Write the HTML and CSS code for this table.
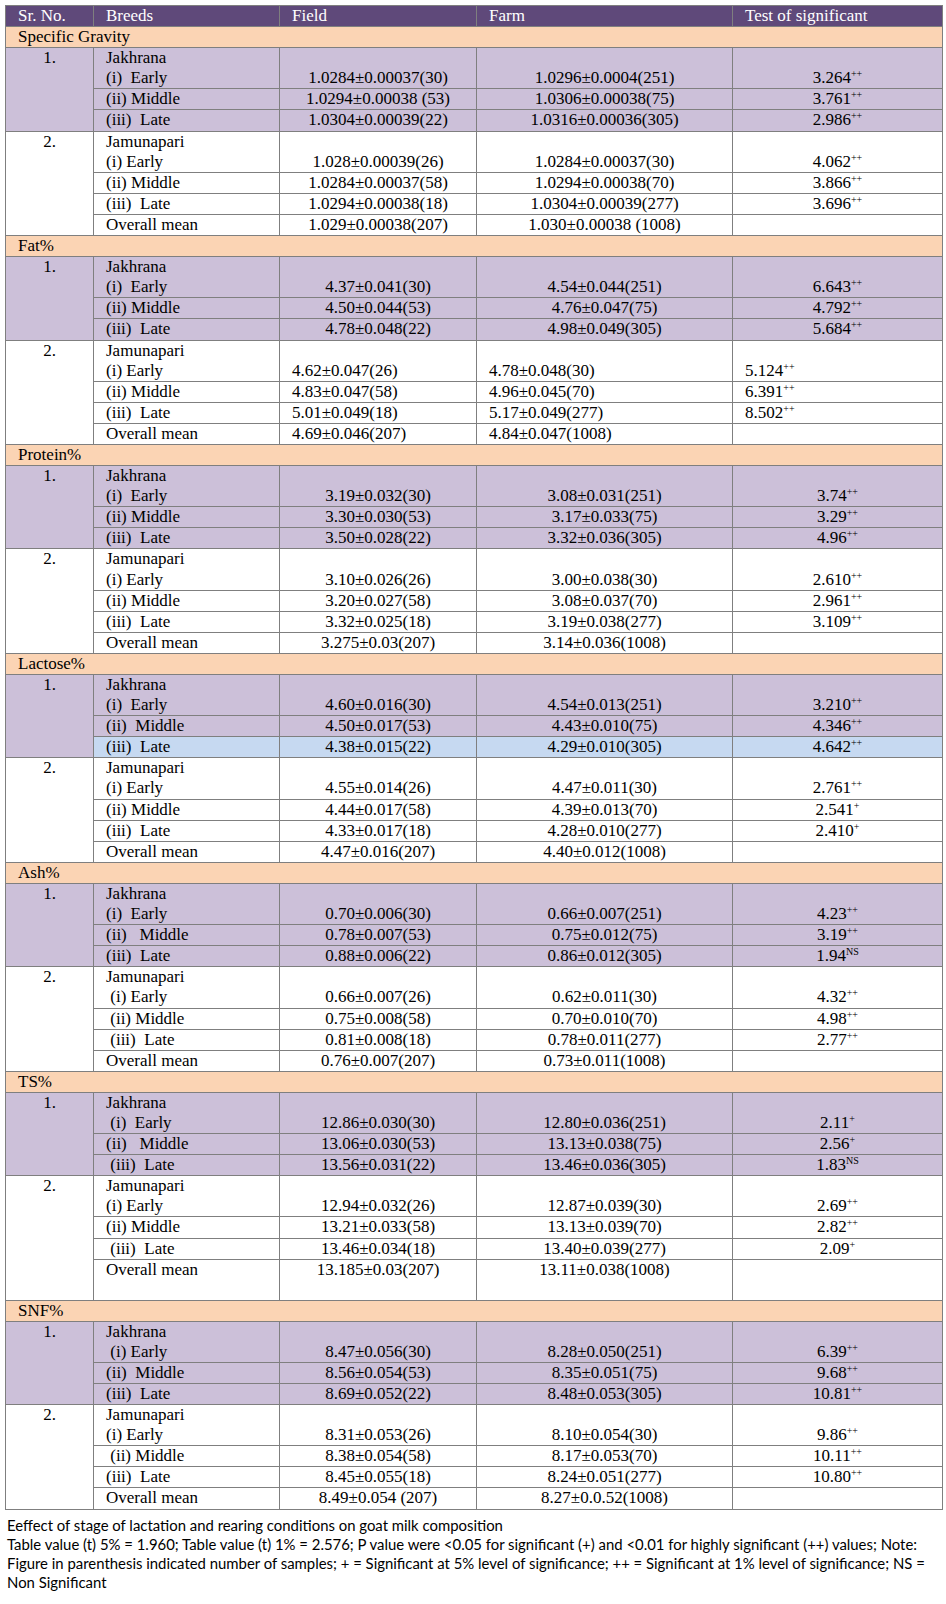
FILE: index.html
```html
<!DOCTYPE html>
<html>
<head>
<meta charset="utf-8">
<title>Goat milk composition</title>
<link rel="stylesheet" href="styles.css">
</head>
<body>
<table class="tbl">
<colgroup><col class="c1"><col class="c2"><col class="c3"><col class="c4"><col class="c5"></colgroup>
<tr class="hd"><th>Sr. No.</th><th>Breeds</th><th>Field</th><th>Farm</th><th>Test of significant</th></tr>

<tr class="sec"><td colspan="5">Specific Gravity</td></tr>
<tr class="jk"><td class="sn" rowspan="3">1.</td><td class="br">Jakhrana
(i)  Early</td><td class="v">1.0284±0.00037(30)</td><td class="v">1.0296±0.0004(251)</td><td class="v">3.264<sup>++</sup></td></tr>
<tr class="jk"><td class="br">(ii) Middle</td><td class="v">1.0294±0.00038 (53)</td><td class="v">1.0306±0.00038(75)</td><td class="v">3.761<sup>++</sup></td></tr>
<tr class="jk"><td class="br">(iii)  Late</td><td class="v">1.0304±0.00039(22)</td><td class="v">1.0316±0.00036(305)</td><td class="v">2.986<sup>++</sup></td></tr>
<tr class="jm"><td class="sn" rowspan="4">2.</td><td class="br">Jamunapari
(i) Early</td><td class="v">1.028±0.00039(26)</td><td class="v">1.0284±0.00037(30)</td><td class="v">4.062<sup>++</sup></td></tr>
<tr class="jm"><td class="br">(ii) Middle</td><td class="v">1.0284±0.00037(58)</td><td class="v">1.0294±0.00038(70)</td><td class="v">3.866<sup>++</sup></td></tr>
<tr class="jm"><td class="br">(iii)  Late</td><td class="v">1.0294±0.00038(18)</td><td class="v">1.0304±0.00039(277)</td><td class="v">3.696<sup>++</sup></td></tr>
<tr class="jm"><td class="br">Overall mean</td><td class="v">1.029±0.00038(207)</td><td class="v">1.030±0.00038 (1008)</td><td class="v"></td></tr>

<tr class="sec"><td colspan="5">Fat%</td></tr>
<tr class="jk"><td class="sn" rowspan="3">1.</td><td class="br">Jakhrana
(i)  Early</td><td class="v">4.37±0.041(30)</td><td class="v">4.54±0.044(251)</td><td class="v">6.643<sup>++</sup></td></tr>
<tr class="jk"><td class="br">(ii) Middle</td><td class="v">4.50±0.044(53)</td><td class="v">4.76±0.047(75)</td><td class="v">4.792<sup>++</sup></td></tr>
<tr class="jk"><td class="br">(iii)  Late</td><td class="v">4.78±0.048(22)</td><td class="v">4.98±0.049(305)</td><td class="v">5.684<sup>++</sup></td></tr>
<tr class="jm"><td class="sn" rowspan="4">2.</td><td class="br">Jamunapari
(i) Early</td><td class="v l">4.62±0.047(26)</td><td class="v l">4.78±0.048(30)</td><td class="v l">5.124<sup>++</sup></td></tr>
<tr class="jm"><td class="br">(ii) Middle</td><td class="v l">4.83±0.047(58)</td><td class="v l">4.96±0.045(70)</td><td class="v l">6.391<sup>++</sup></td></tr>
<tr class="jm"><td class="br">(iii)  Late</td><td class="v l">5.01±0.049(18)</td><td class="v l">5.17±0.049(277)</td><td class="v l">8.502<sup>++</sup></td></tr>
<tr class="jm"><td class="br">Overall mean</td><td class="v l">4.69±0.046(207)</td><td class="v l">4.84±0.047(1008)</td><td class="v l"></td></tr>

<tr class="sec"><td colspan="5">Protein%</td></tr>
<tr class="jk"><td class="sn" rowspan="3">1.</td><td class="br">Jakhrana
(i)  Early</td><td class="v">3.19±0.032(30)</td><td class="v">3.08±0.031(251)</td><td class="v">3.74<sup>++</sup></td></tr>
<tr class="jk"><td class="br">(ii) Middle</td><td class="v">3.30±0.030(53)</td><td class="v">3.17±0.033(75)</td><td class="v">3.29<sup>++</sup></td></tr>
<tr class="jk"><td class="br">(iii)  Late</td><td class="v">3.50±0.028(22)</td><td class="v">3.32±0.036(305)</td><td class="v">4.96<sup>++</sup></td></tr>
<tr class="jm"><td class="sn" rowspan="4">2.</td><td class="br">Jamunapari
(i) Early</td><td class="v">3.10±0.026(26)</td><td class="v">3.00±0.038(30)</td><td class="v">2.610<sup>++</sup></td></tr>
<tr class="jm"><td class="br">(ii) Middle</td><td class="v">3.20±0.027(58)</td><td class="v">3.08±0.037(70)</td><td class="v">2.961<sup>++</sup></td></tr>
<tr class="jm"><td class="br">(iii)  Late</td><td class="v">3.32±0.025(18)</td><td class="v">3.19±0.038(277)</td><td class="v">3.109<sup>++</sup></td></tr>
<tr class="jm"><td class="br">Overall mean</td><td class="v">3.275±0.03(207)</td><td class="v">3.14±0.036(1008)</td><td class="v"></td></tr>

<tr class="sec"><td colspan="5">Lactose%</td></tr>
<tr class="jk"><td class="sn" rowspan="3">1.</td><td class="br">Jakhrana
(i)  Early</td><td class="v">4.60±0.016(30)</td><td class="v">4.54±0.013(251)</td><td class="v">3.210<sup>++</sup></td></tr>
<tr class="jk"><td class="br">(ii)  Middle</td><td class="v">4.50±0.017(53)</td><td class="v">4.43±0.010(75)</td><td class="v">4.346<sup>++</sup></td></tr>
<tr class="jk hl"><td class="br">(iii)  Late</td><td class="v">4.38±0.015(22)</td><td class="v">4.29±0.010(305)</td><td class="v">4.642<sup>++</sup></td></tr>
<tr class="jm"><td class="sn" rowspan="4">2.</td><td class="br">Jamunapari
(i) Early</td><td class="v">4.55±0.014(26)</td><td class="v">4.47±0.011(30)</td><td class="v">2.761<sup>++</sup></td></tr>
<tr class="jm"><td class="br">(ii) Middle</td><td class="v">4.44±0.017(58)</td><td class="v">4.39±0.013(70)</td><td class="v">2.541<sup>+</sup></td></tr>
<tr class="jm"><td class="br">(iii)  Late</td><td class="v">4.33±0.017(18)</td><td class="v">4.28±0.010(277)</td><td class="v">2.410<sup>+</sup></td></tr>
<tr class="jm"><td class="br">Overall mean</td><td class="v">4.47±0.016(207)</td><td class="v">4.40±0.012(1008)</td><td class="v"></td></tr>

<tr class="sec"><td colspan="5">Ash%</td></tr>
<tr class="jk"><td class="sn" rowspan="3">1.</td><td class="br">Jakhrana
(i)  Early</td><td class="v">0.70±0.006(30)</td><td class="v">0.66±0.007(251)</td><td class="v">4.23<sup>++</sup></td></tr>
<tr class="jk"><td class="br">(ii)   Middle</td><td class="v">0.78±0.007(53)</td><td class="v">0.75±0.012(75)</td><td class="v">3.19<sup>++</sup></td></tr>
<tr class="jk"><td class="br">(iii)  Late</td><td class="v">0.88±0.006(22)</td><td class="v">0.86±0.012(305)</td><td class="v">1.94<sup>NS</sup></td></tr>
<tr class="jm"><td class="sn" rowspan="4">2.</td><td class="br">Jamunapari
 (i) Early</td><td class="v">0.66±0.007(26)</td><td class="v">0.62±0.011(30)</td><td class="v">4.32<sup>++</sup></td></tr>
<tr class="jm"><td class="br"> (ii) Middle</td><td class="v">0.75±0.008(58)</td><td class="v">0.70±0.010(70)</td><td class="v">4.98<sup>++</sup></td></tr>
<tr class="jm"><td class="br"> (iii)  Late</td><td class="v">0.81±0.008(18)</td><td class="v">0.78±0.011(277)</td><td class="v">2.77<sup>++</sup></td></tr>
<tr class="jm"><td class="br">Overall mean</td><td class="v">0.76±0.007(207)</td><td class="v">0.73±0.011(1008)</td><td class="v"></td></tr>

<tr class="sec"><td colspan="5">TS%</td></tr>
<tr class="jk"><td class="sn" rowspan="3">1.</td><td class="br">Jakhrana
 (i)  Early</td><td class="v">12.86±0.030(30)</td><td class="v">12.80±0.036(251)</td><td class="v">2.11<sup>+</sup></td></tr>
<tr class="jk"><td class="br">(ii)   Middle</td><td class="v">13.06±0.030(53)</td><td class="v">13.13±0.038(75)</td><td class="v">2.56<sup>+</sup></td></tr>
<tr class="jk"><td class="br"> (iii)  Late</td><td class="v">13.56±0.031(22)</td><td class="v">13.46±0.036(305)</td><td class="v">1.83<sup>NS</sup></td></tr>
<tr class="jm"><td class="sn" rowspan="4">2.</td><td class="br">Jamunapari
(i) Early</td><td class="v">12.94±0.032(26)</td><td class="v">12.87±0.039(30)</td><td class="v">2.69<sup>++</sup></td></tr>
<tr class="jm"><td class="br">(ii) Middle</td><td class="v">13.21±0.033(58)</td><td class="v">13.13±0.039(70)</td><td class="v">2.82<sup>++</sup></td></tr>
<tr class="jm"><td class="br"> (iii)  Late</td><td class="v">13.46±0.034(18)</td><td class="v">13.40±0.039(277)</td><td class="v">2.09<sup>+</sup></td></tr>
<tr class="jm tall"><td class="br">Overall mean</td><td class="v">13.185±0.03(207)</td><td class="v">13.11±0.038(1008)</td><td class="v"></td></tr>

<tr class="sec"><td colspan="5">SNF%</td></tr>
<tr class="jk"><td class="sn" rowspan="3">1.</td><td class="br">Jakhrana
 (i) Early</td><td class="v">8.47±0.056(30)</td><td class="v">8.28±0.050(251)</td><td class="v">6.39<sup>++</sup></td></tr>
<tr class="jk"><td class="br">(ii)  Middle</td><td class="v">8.56±0.054(53)</td><td class="v">8.35±0.051(75)</td><td class="v">9.68<sup>++</sup></td></tr>
<tr class="jk"><td class="br">(iii)  Late</td><td class="v">8.69±0.052(22)</td><td class="v">8.48±0.053(305)</td><td class="v">10.81<sup>++</sup></td></tr>
<tr class="jm"><td class="sn" rowspan="4">2.</td><td class="br">Jamunapari
(i) Early</td><td class="v">8.31±0.053(26)</td><td class="v">8.10±0.054(30)</td><td class="v">9.86<sup>++</sup></td></tr>
<tr class="jm"><td class="br"> (ii) Middle</td><td class="v">8.38±0.054(58)</td><td class="v">8.17±0.053(70)</td><td class="v">10.11<sup>++</sup></td></tr>
<tr class="jm"><td class="br">(iii)  Late</td><td class="v">8.45±0.055(18)</td><td class="v">8.24±0.051(277)</td><td class="v">10.80<sup>++</sup></td></tr>
<tr class="jm"><td class="br">Overall mean</td><td class="v">8.49±0.054 (207)</td><td class="v">8.27±0.0.52(1008)</td><td class="v"></td></tr>
</table>
<div class="note">
<p>Eeffect of stage of lactation and rearing conditions on goat milk composition</p>
<p>Table value (t) 5% = 1.960; Table value (t) 1% = 2.576; P value were &lt;0.05 for significant (+) and &lt;0.01 for highly significant (++) values; Note: Figure in parenthesis indicated number of samples; + = Significant at 5% level of significance; ++ = Significant at 1% level of significance; NS = Non Significant</p>
</div>
</body>
</html>
```

FILE: styles.css
```css
body {
  margin: 0;
  padding: 5px;
  background: #ffffff;
  color: #000000;
}

.tbl {
  border-collapse: collapse;
  table-layout: fixed;
  width: 937px;
  font-family: "Liberation Serif", "Times New Roman", serif;
  font-size: 17px;
  line-height: 20.1px;
}

.c1 { width: 88px; }
.c2 { width: 186px; }
.c3 { width: 197px; }
.c4 { width: 256px; }
.c5 { width: 210px; }

.tbl th,
.tbl td {
  border: 1px solid #7f7f7f;
  padding: 0 11px 0 12px;
  text-align: left;
  font-weight: normal;
  vertical-align: top;
  white-space: nowrap;
}

.hd th {
  background: #5f497a;
  color: #ffffff;
}

.sec td {
  background: #fbd4b4;
}

.jk td {
  background: #ccc0d9;
}

.jk.hl td {
  background: #c6d9f1;
}

.jm td {
  background: #ffffff;
}

.tbl td.sn {
  text-align: center;
  padding: 0;
}

.tbl td.br {
  white-space: pre;
}

.tbl td.v {
  text-align: center;
  vertical-align: bottom;
  padding: 0 4px;
}

.tbl td.v.l {
  text-align: left;
  padding-left: 12px;
}

.tall td {
  height: 40px;
}

.tall td.v {
  vertical-align: top;
}

.tbl sup {
  font-size: 10px;
  line-height: 0;
  vertical-align: 6px;
}

.note {
  margin-top: 6px;
  padding-left: 2px;
  width: 930px;
  font-family: Lato, "Liberation Sans", Arial, sans-serif;
  font-size: 14.9px;
  line-height: 19px;
}

.note p {
  margin: 0;
}
```
